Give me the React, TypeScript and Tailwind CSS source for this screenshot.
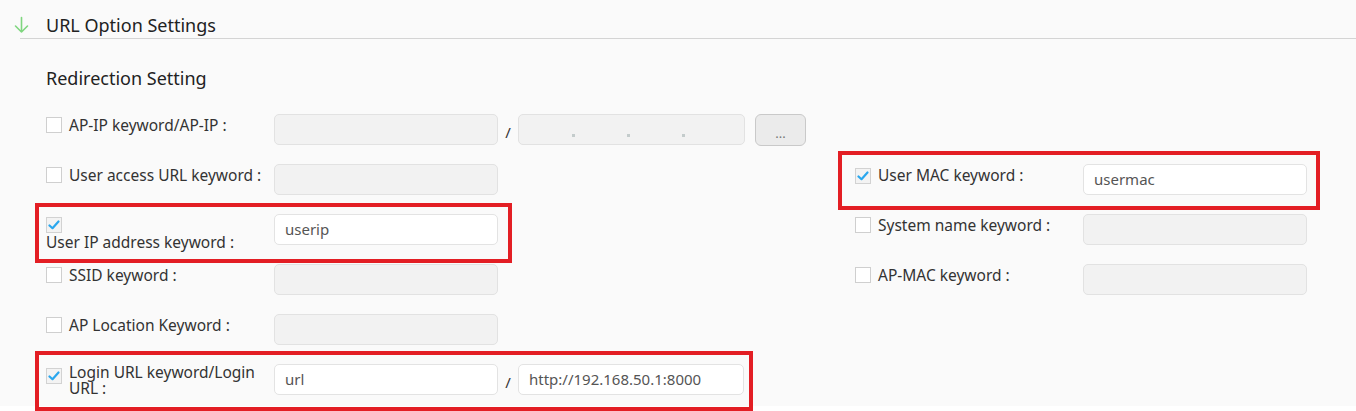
import React from 'react';

const font = { fontFamily: '"Noto Sans", "Liberation Sans", sans-serif' };

function Check({ on }: { on?: boolean }) {
  return (
    <span className={`inline-flex shrink-0 w-4 h-4 items-center justify-center border ${on ? 'border-[#d2d2d2] bg-[#f3f3f3]' : 'border-[#cfcfcf] bg-white'}`}>
      {on && (
        <svg width="12" height="10" viewBox="0 0 12 10">
          <path d="M1.5 5.5 L4.5 8.2 L10.5 1.5" fill="none" stroke="#2aa7ee" strokeWidth="2.2" strokeLinecap="round" strokeLinejoin="round" />
        </svg>
      )}
    </span>
  );
}

function Field({ value, w = 'w-[224px]', children }: { value?: string; w?: string; children?: React.ReactNode }) {
  const enabled = value !== undefined;
  return (
    <div className={`${w} h-[31px] shrink-0 rounded-[5px] border flex items-center pl-[10px] text-[15px] text-[#555] ${enabled ? 'bg-white border-[#e3e3e3]' : 'bg-[#f2f2f2] border-[#e2e2e2]'}`}>
      {value}
      {children}
    </div>
  );
}

function Row({ label, on, value, extra, box }: { label: React.ReactNode; on?: boolean; value?: string; extra?: React.ReactNode; box?: React.ReactNode }) {
  return (
    <div className="relative flex h-[31px] mb-[19px]">
      {box}
      <div className="w-[228px] shrink-0 flex items-start gap-[7px] pt-[2px] text-[15.5px] leading-[17px] text-[#333]">
        <span className="mt-[1px]"><Check on={on} /></span>
        <span className="pt-[1px]">{label}</span>
      </div>
      <Field value={value} />
      {extra}
    </div>
  );
}

function RedBox({ className }: { className: string }) {
  return <div className={`absolute border-4 border-[#e31e24] pointer-events-none ${className}`} />;
}

export default function App() {
  return (
    <div style={font} className="w-[1356px] h-[411px] bg-white overflow-hidden">
      <div className="h-[406px] bg-[#fafafa]">
        <div className="ml-[20px] h-[39px] border-b border-[#d4d4d4] flex items-end">
          <svg width="15" height="18" viewBox="0 0 15 18" className="mb-[4px] ml-[-6px]">
            <path d="M7.5 1.5 V16 M1.5 10 L7.5 16 L13.5 10" fill="none" stroke="#7fd67f" strokeWidth="1.6" strokeLinecap="round" strokeLinejoin="round" />
          </svg>
          <span className="ml-[17px] text-[18px] leading-[24px] text-[#222] mb-[1px]">URL Option Settings</span>
        </div>
        <div className="pl-[46px]">
          <div className="mt-[27px] text-[18px] leading-[24px] text-[#222]">Redirection Setting</div>
          <div className="mt-[24px] flex">
            <div className="w-[809px] shrink-0">
              <Row
                label="AP-IP keyword/AP-IP :"
                extra={
                  <div className="flex">
                    <span className="w-[20px] text-center text-[15px] leading-[31px] text-[#333] pt-[3px]">/</span>
                    <Field w="w-[227px]">
                      <div className="flex w-full pt-[12px]">
                        <span className="ml-[43px] w-[3px] h-[3px] bg-[#c4cccc]" />
                        <span className="ml-[52px] w-[3px] h-[3px] bg-[#c4cccc]" />
                        <span className="ml-[52px] w-[3px] h-[3px] bg-[#c4cccc]" />
                      </div>
                    </Field>
                    <button className="ml-[10px] w-[51px] h-[32px] rounded-[6px] border border-[#c9c9c9] bg-[#ebebeb] text-[13px] text-[#777] leading-[32px] pt-[2px]">...</button>
                  </div>
                }
              />
              <Row label="User access URL keyword :" />
              <div className="relative flex h-[31px] mb-[19px]">
                <RedBox className="left-[-11px] top-[-11px] w-[477px] h-[60px]" />
                <div className="w-[228px] shrink-0 pt-[1px] text-[15.5px] leading-[18px] text-[#333]">
                  <Check on />
                  <div>User IP address keyword :</div>
                </div>
                <Field value="userip" />
              </div>
              <Row label="SSID keyword :" />
              <Row label="AP Location Keyword :" />
              <Row
                on
                value="url"
                label={<span className="block w-[195px] leading-[16px] -mt-[3px]">Login URL keyword/Login URL :</span>}
                box={<RedBox className="left-[-11px] top-[-13px] w-[718px] h-[60px]" />}
                extra={
                  <div className="flex">
                    <span className="w-[20px] text-center text-[15px] leading-[31px] text-[#333] pt-[3px]">/</span>
                    <Field w="w-[226px]" value="http://192.168.50.1:8000" />
                  </div>
                }
              />
            </div>
            <div className="pt-[50px]">
              <Row
                on
                label="User MAC keyword :"
                value="usermac"
                box={<RedBox className="left-[-17px] top-[-13px] w-[482px] h-[59px]" />}
              />
              <Row label="System name keyword :" />
              <Row label="AP-MAC keyword :" />
            </div>
          </div>
        </div>
      </div>
    </div>
  );
}
